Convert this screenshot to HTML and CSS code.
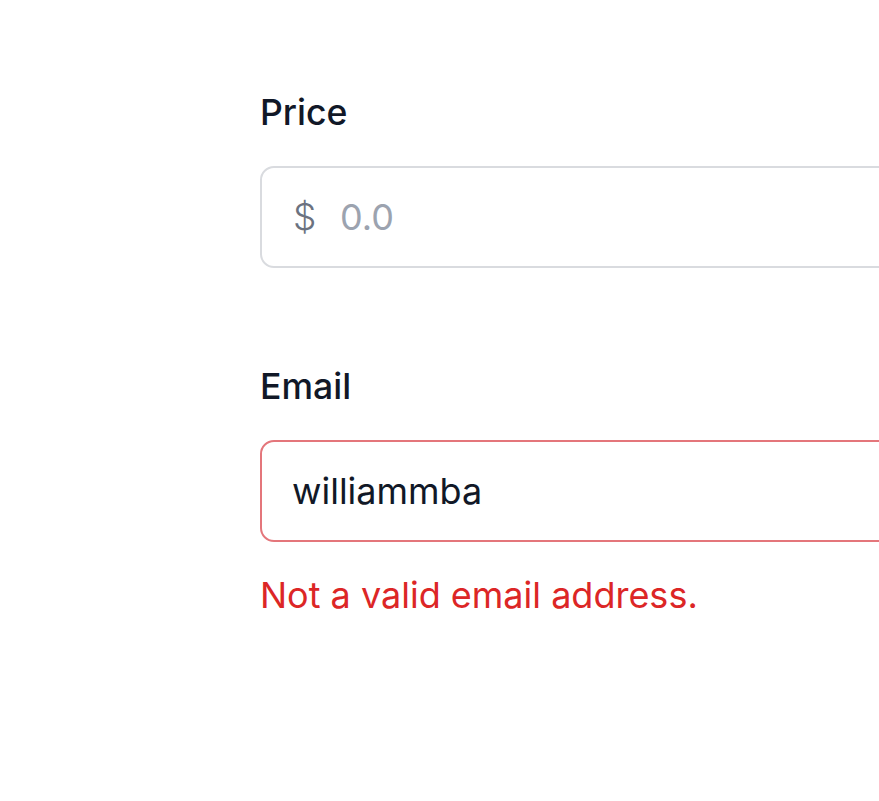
FILE: index.html
```html
<!DOCTYPE html>
<html lang="en">
<head>
<meta charset="utf-8">
<title>Form</title>
<link rel="stylesheet" href="styles.css">
</head>
<body>
<main class="form">
  <div class="field">
    <label class="label" for="price">Price</label>
    <div class="control">
      <span class="prefix">$</span>
      <input id="price" class="input input-price" type="text" placeholder="0.0">
    </div>
  </div>
  <div class="field field-email">
    <label class="label" for="email">Email</label>
    <div class="control control-error">
      <input id="email" class="input" type="text" value="williammba">
    </div>
    <p class="error">Not a valid email address.</p>
  </div>
</main>
</body>
</html>
```
FILE: styles.css
```css
html, body {
  margin: 0;
  padding: 0;
  overflow: hidden;
  background: #ffffff;
}
body {
  font-family: Inter, "Noto Sans", "Liberation Sans", sans-serif;
  color: #111827;
}
.form {
  padding: 88px 0 0 260px;
  width: 640px;
}
.field {
  display: flex;
  flex-direction: column;
}
.field-email {
  margin-top: 94px;
}
.label {
  display: block;
  font-size: 35.6px;
  line-height: 50px;
  font-weight: 500;
  color: #111827;
  margin-bottom: 28px;
}
.control {
  box-sizing: border-box;
  height: 102px;
  border: 2.5px solid #d9dbdf;
  border-radius: 14px;
  display: flex;
  align-items: center;
  padding: 0 30px;
  background: #fff;
}
.control-error {
  border-color: #e4767b;
}
.prefix {
  font-size: 37px;
  line-height: 60px;
  color: #6b7280;
  width: 47px;
  flex: none;
  padding-left: 1px;
  font-weight: 300;
}
.input {
  flex: 1;
  min-width: 0;
  border: 0;
  outline: none;
  padding: 0;
  margin: 0;
  font-family: inherit;
  font-size: 36px;
  line-height: 60px;
  height: 60px;
  color: #111827;
  background: transparent;
}
.input::placeholder {
  color: #9ca3af;
  opacity: 1;
}
.error {
  margin: 28px 0 0;
  font-size: 36px;
  line-height: 50px;
  color: #dc2626;
}
```
